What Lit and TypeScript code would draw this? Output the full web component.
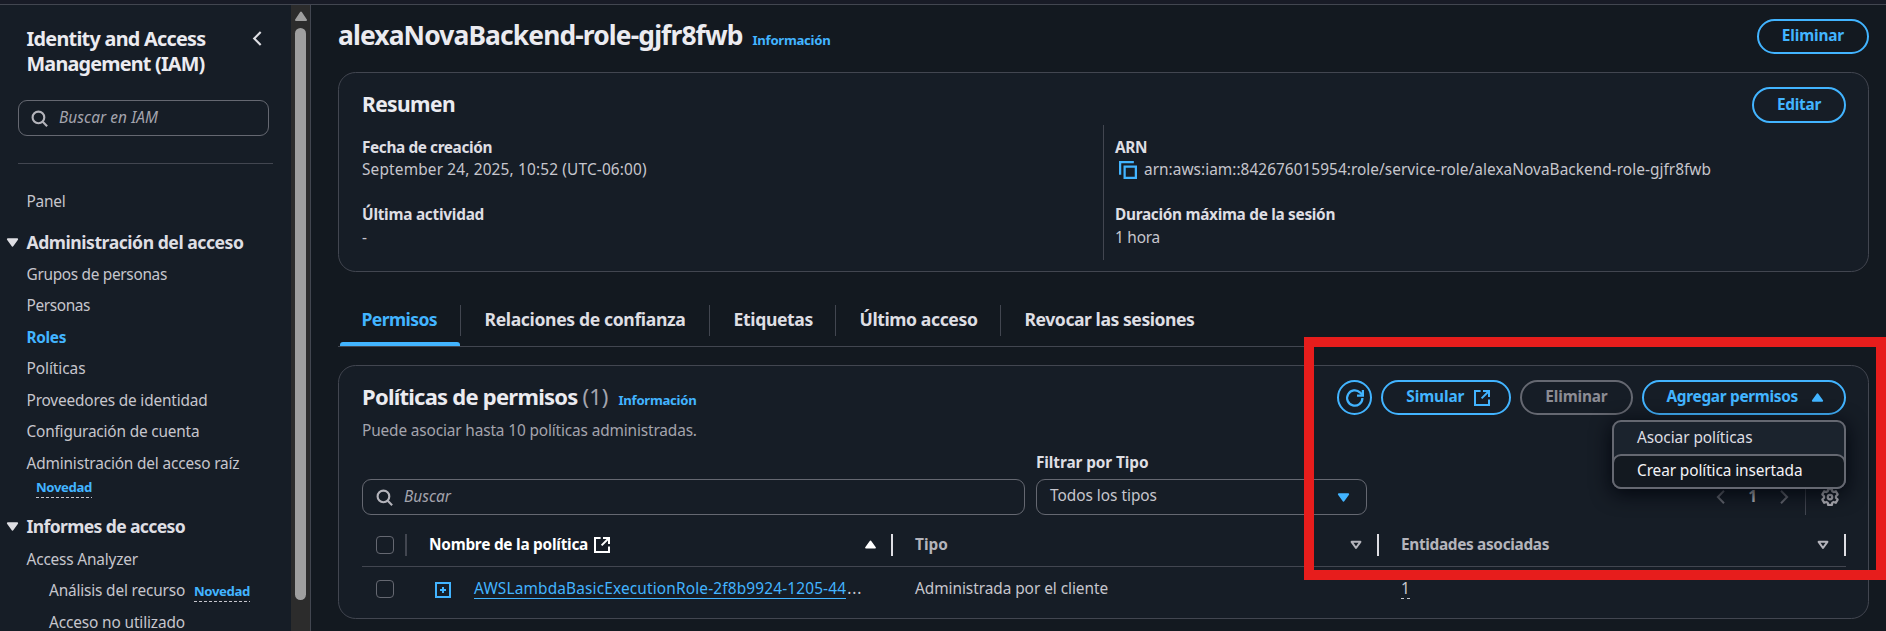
import { LitElement, html, css, svg, nothing } from "lit";
import { customElement, property } from "lit/decorators.js";
import { classMap } from "lit/directives/class-map.js";
import { styleMap } from "lit/directives/style-map.js";

/* Text with its tracking in px. */
const tx = (text: string, track: number, cls = "") =>
  html`<span class=${"tx " + cls} style=${styleMap({ letterSpacing: `${track}px` })}>${text}</span>`;

const icons: Record<string, unknown> = {
  search: svg`<circle cx="7" cy="7" r="5.5" fill="none"/><path d="m11 11 4.2 4.2" fill="none"/>`,
  left: svg`<path d="M11 1.8 4.9 8l6.1 6.2" fill="none"/>`,
  right: svg`<path d="M5 1.8 11.1 8 5 14.2" fill="none"/>`,
  down: svg`<path d="M3 4.5h10l-5 7z" fill="currentColor" stroke-linejoin="round"/>`,
  up: svg`<path d="M3 11.5h10l-5-7z" fill="currentColor" stroke-linejoin="round"/>`,
  downOutline: svg`<path d="M3.6 4.8h8.8L8 11z" fill="none" stroke-linejoin="round"/>`,
  external: svg`<path d="M6.6 1H1v14h14V9.6M9 1h6v6M15 1 7.6 8.4" fill="none"/>`,
  copy: svg`<path d="M1 12.2V1h12.2" fill="none"/><path d="M5 5h10v10H5z" fill="none"/>`,
  refresh: svg`<path d="M14.6 8A6.8 6.8 0 1 1 12.6 3.2L14.6 5.4" fill="none"/><path d="M15 .8v5H9.8" fill="none"/>`,
  plus: svg`<path d="M1 1h14v14H1z" fill="none"/><path d="M8 5v6M5 8h6" fill="none"/>`,
  gear: svg`<path d="M6.4 1h3.2l.5 2 1.1.6 2-.7 1.6 2.8L13.3 7.3v1.4l1.5 1.6-1.6 2.8-2-.7-1.1.6-.5 2H6.4l-.5-2-1.1-.6-2 .7-1.6-2.8 1.5-1.6V7.3L1.2 5.7l1.6-2.8 2 .7L5.9 3z" fill="none" stroke-linejoin="round"/><circle cx="8" cy="8" r="2" fill="none"/>`,
};

@customElement("iam-icon")
export class IamIcon extends LitElement {
  @property() name = "";
  @property({ type: Number }) size = 18;
  @property({ type: Number }) weight = 2;
  static styles = css`
    :host { display: inline-flex; flex: none; }
    svg { display: block; stroke: currentColor; overflow: visible; }
  `;
  render() {
    return html`<svg width=${this.size} height=${this.size} viewBox="0 0 16 16" stroke-width=${this.weight}>${icons[this.name]}</svg>`;
  }
}

const base = css`
  * { box-sizing: border-box; }
  :host { font: 400 15.4px/22px "Noto Sans", "Open Sans", sans-serif; color: #c6c6cd; }
  .tx { white-space: nowrap; }
  .bold { font-weight: 700; color: #dedee3; }
  .blue { color: #42b4ff; }
  .small { font-size: 13.2px; font-weight: 700; }
  .input {
    display: flex; align-items: center; height: 36px;
    border: 1px solid #656871; border-radius: 9px; padding: 0 12px;
  }
  .input iam-icon { color: #b4b4bb; }
  .input .hint { font-style: italic; color: #a4a4ad; margin-left: 11px; }
`;

interface NavItem { text: string; track: number; active?: boolean; sub?: boolean; badge?: "inline" | "below"; }

const accessItems: NavItem[] = [
  { text: "Grupos de personas", track: -0.31 },
  { text: "Personas", track: -0.38 },
  { text: "Roles", track: -0.34, active: true },
  { text: "Políticas", track: -0.06 },
  { text: "Proveedores de identidad", track: -0.18 },
  { text: "Configuración de cuenta", track: -0.18 },
  { text: "Administración del acceso raíz", track: -0.16, badge: "below" },
];
const reportItems: NavItem[] = [
  { text: "Access Analyzer", track: -0.17 },
  { text: "Análisis del recurso", track: -0.17, sub: true, badge: "inline" },
  { text: "Acceso no utilizado", track: -0.13, sub: true },
];

@customElement("iam-sidebar")
export class IamSidebar extends LitElement {
  static styles = [base, css`
    :host { display: flex; width: 311px; height: 100%; border-right: 1px solid #424650; overflow: hidden; }
    .nav { width: 291px; background: #161d26; flex: none; }
    .head { display: flex; justify-content: space-between; padding: 21px 25px 0 26.5px; height: 95px; }
    .title { font: 700 19.8px/25px "Noto Sans", sans-serif; color: #ebebf0; display: flex; flex-direction: column; }
    .head iam-icon { margin-top: 3.5px; color: #dedee3; }
    .input { width: 251px; margin-left: 18px; }
    .rule { height: 1px; background: #424650; margin: 27px 18px 0; }
    .panel { height: 32px; display: flex; align-items: center; margin: 22px 0 8px 26.5px; }
    .section { height: 32px; display: flex; align-items: center; padding-left: 6px; gap: 8.5px; font-size: 17.6px; margin-bottom: 1px; }
    .section.last { margin-bottom: 2px; }
    .section iam-icon { color: #dedee3; width: 12px; justify-content: center; }
    .item { height: 31.5px; display: flex; align-items: center; padding-left: 26.5px; gap: 9px; }
    .item.sub { padding-left: 49px; }
    .item.active .tx { color: #42b4ff; font-weight: 700; }
    .below { height: 31.5px; margin-top: -1px; padding-left: 36px; display: flex; align-items: flex-start; }
    .badge { color: #42b4ff; font-size: 13.2px; font-weight: 700; line-height: 17px; }
    .dash { display: flex; padding-bottom: 2.5px;
      background: repeating-linear-gradient(90deg, #c6c6cd 0 3px, transparent 3px 5px) left bottom / 100% 1px no-repeat; }
    .item .dash { margin-top: 2px; }
    .scroll { width: 19px; background: #2c2c2c; display: flex; flex-direction: column; align-items: center; padding-top: 6px; flex: none; }
    .thumb { width: 11px; height: 572px; margin-top: 7px; border-radius: 6px; background: #9f9f9f; flex: none; }
  `];
  private badge() { return html`<span class="dash">${tx("Novedad", -0.38, "badge")}</span>`; }
  private item(i: NavItem) {
    return html`<div class=${classMap({ item: true, sub: !!i.sub, active: !!i.active })}>
        ${tx(i.text, i.track)}${i.badge === "inline" ? this.badge() : nothing}
      </div>${i.badge === "below" ? html`<div class="below">${this.badge()}</div>` : nothing}`;
  }
  render() {
    return html`
      <div class="nav">
        <div class="head">
          <div class="title">${tx("Identity and Access", -0.71)}${tx("Management (IAM)", -0.79)}</div>
          <iam-icon name="left" size="17"></iam-icon>
        </div>
        <div class="input"><iam-icon name="search" size="17"></iam-icon>${tx("Buscar en IAM", 0.09, "hint")}</div>
        <div class="rule"></div>
        <div class="panel">${tx("Panel", -0.22)}</div>
        <div class="section"><iam-icon name="down" size="15"></iam-icon>${tx("Administración del acceso", -0.47, "bold")}</div>
        ${accessItems.map((i) => this.item(i))}
        <div class="section last"><iam-icon name="down" size="15"></iam-icon>${tx("Informes de acceso", -0.65, "bold")}</div>
        ${reportItems.map((i) => this.item(i))}
      </div>
      <div class="scroll">
        <svg width="12" height="10" viewBox="0 0 12 10"><path d="M6 1.5 11 9H1z" fill="#9f9f9f" stroke="#9f9f9f" stroke-width="2" stroke-linejoin="round"/></svg>
        <div class="thumb"></div>
      </div>`;
  }
}

const tabs: [string, number, number][] = [
  ["Permisos", -0.61, 123],
  ["Relaciones de confianza", -0.37, 249],
  ["Etiquetas", -0.37, 126],
  ["Último acceso", -0.4, 165],
  ["Revocar las sesiones", -0.46, 194],
];

@customElement("app-root")
export class AppRoot extends LitElement {
  static styles = [base, css`
    :host { display: flex; flex-direction: column; position: relative; width: 1886px; height: 631px; overflow: hidden; background: #131920; }
    .topbar { height: 5px; flex: none; background: #181b26; border-bottom: 1px solid #424650; }
    .body { display: flex; flex: 1; min-height: 0; }
    main { flex: 1; padding: 0 17px 0 27px; display: flex; flex-direction: column; min-width: 0; }
    .titlebar { height: 67px; display: flex; justify-content: space-between; padding-top: 14px; flex: none; }
    .h { display: flex; align-items: baseline; color: #ebebf0; font-weight: 700; }
    .h1 { font-size: 26.4px; line-height: 32px; height: 32px; gap: 10px; }
    .h2 { font-size: 22px; line-height: 32px; height: 32px; }
    .btn { height: 35px; border: 2px solid #42b4ff; border-radius: 18px; color: #42b4ff; font-weight: 700;
      display: flex; align-items: center; padding: 0 23px; flex: none; }
    .btn .tx { padding-bottom: 2px; }
    .btn.off { border-color: #656871; color: #8c8c94; }
    .card { border: 1px solid #424650; border-radius: 17.6px; background: #161d26; padding: 0 22px 0 23px; flex: none; }
    .summary { height: 200px; }
    .cardhead { display: flex; justify-content: space-between; padding-top: 14px; height: 52px; }
    .cardhead .h { font-size: 21px; line-height: 34px; }
    .cardhead .btn { height: 36px; }
    .cardhead .btn .tx { padding-bottom: 1px; }
    .cols { display: grid; grid-template-columns: 741px 1fr; height: 135px; }
    .col { padding-top: 11.5px; display: flex; flex-direction: column; }
    .col + .col { border-left: 1px solid #424650; padding-left: 11px; }
    .val { height: 23px; display: flex; align-items: center; }
    .gap { height: 22.5px; }
    .arn { gap: 7px; padding-left: 4px; }
    .tabs { display: flex; height: 75px; padding-top: 33px; border-bottom: 1px solid #424650; flex: none; }
    .tab { display: flex; flex-direction: column; justify-content: space-between; font-size: 17.6px; }
    .tab .label { height: 31px; line-height: 28px; padding-left: 23.5px; border-right: 1px solid #424650; }
    .tab:last-child .label { border-right: 0; }
    .tab .blue { color: #42b4ff; }
    .bar { height: 4px; width: 120px; margin-left: 2px; border-radius: 3px 3px 0 0; background: #42b4ff; }
    .policies { margin-top: 18px; height: 254px; }
    .phead { display: flex; justify-content: space-between; padding-top: 14px; height: 85px; }
    .count { font-weight: 400; color: #a4a4ad; margin: 0 10px 0 5px; }
    .desc { color: #a4a4ad; margin-top: 8px; }
    .actions { display: flex; gap: 9px; align-items: flex-start; }
    .round { padding: 0; width: 35px; justify-content: center; }
    .simulate { gap: 10px; padding-right: 19px; }
    .menuwrap { position: relative; }
    .add { gap: 12px; padding-right: 19px; }
    .menu { position: absolute; z-index: 2; top: 40px; right: 0; width: 234px; height: 69px; border: 2px solid #656871; border-radius: 9px;
      background: #1b232d; box-shadow: 0 4px 20px 1px rgba(0, 4, 12, 0.9); color: #dedee3; display: flex; flex-direction: column; }
    .opt { height: 32px; line-height: 29px; padding: 1px 23px 0; flex: none; }
    .opt.hot { height: 35px; margin: 0 -2px -2px; border: 2px solid #656871; border-radius: 9px; background: #131920; color: #f3f3f7; line-height: 29px; padding: 0 23px; }
    .filters { display: flex; align-items: flex-end; height: 64px; }
    .filters .find { width: 663px; }
    .find iam-icon { margin-left: 1px; }
    .type { width: 331px; margin-left: 11px; }
    .type .label { display: block; margin-bottom: 5px; }
    .type .input { justify-content: space-between; padding: 0 15px 0 13px; }
    .type .input .tx { padding-bottom: 2px; }
    .type .input iam-icon { color: #42b4ff; }
    .pager { margin-left: auto; height: 36px; display: flex; align-items: center; color: #656871; }
    .page { color: #b4b4bb; font-weight: 700; margin: 0 18.5px 0 19.5px; padding-bottom: 1px; }
    .vr { width: 1px; height: 36px; background: #424650; margin: 0 15px 0 13.5px; }
    .pager .gear { color: #b4b4bb; margin-right: 7px; }
    .row { display: grid; grid-template-columns: 45px 486px 486px 467px; align-items: center; }
    .thead { height: 52px; padding-top: 8px; border-bottom: 1px solid #424650; color: #b4b4bb; font-weight: 700; }
    .trow { height: 44px; }
    .cell { display: flex; align-items: center; padding-left: 22px; height: 22px; }
    .thead .cell { border-right: 2px solid #dedee3; padding-right: 13px; }
    .cell .sort { margin-left: auto; }
    .cell.sorted { color: #fff; }
    .thead .cell.sel { border-color: #424650; padding-right: 0; }
    .cell.sel { padding-left: 14px; }
    .box { width: 18px; height: 18px; border: 1.6px solid #656871; border-radius: 4px; flex: none; }
    .ext { margin: 1px 0 0 6px; }
    .exp { margin: 0 23px 0 6px; padding-top: 2px; color: #42b4ff; }
    .link { color: #42b4ff; border-bottom: 1px solid #42b4ff; height: 21px; align-self: flex-start; }
    .more { margin-left: 1px; }
    .num { background: repeating-linear-gradient(90deg, #c6c6cd 0 3px, transparent 3px 6px) left bottom / 100% 1px no-repeat; height: 21px; align-self: flex-start; }
    .mark { position: absolute; z-index: 3; left: 1304px; top: 336.5px; width: 582px; height: 243.5px; border: 10px solid #e71d1c; }
  `];

  render() {
    return html`
      <div class="topbar"></div>
      <div class="body">
        <iam-sidebar></iam-sidebar>
        <main>
          <div class="titlebar">
            <div class="h h1">${tx("alexaNovaBackend-role-gjfr8fwb", -0.87)}${tx("Información", -0.3, "small blue")}</div>
            <div class="btn">${tx("Eliminar", -0.17)}</div>
          </div>
          <section class="card summary">
            <div class="cardhead">
              <div class="h h2">${tx("Resumen", -0.6)}</div>
              <div class="btn">${tx("Editar", -0.29)}</div>
            </div>
            <div class="cols">
              <div class="col">
                ${tx("Fecha de creación", -0.4, "bold")}
                <div class="val">${tx("September 24, 2025, 10:52 (UTC-06:00)", 0.16)}</div>
                <div class="gap"></div>
                ${tx("Última actividad", -0.26, "bold")}
                <div class="val">-</div>
              </div>
              <div class="col">
                ${tx("ARN", -0.42, "bold")}
                <div class="val arn"><iam-icon class="blue" name="copy" size="18"></iam-icon>${tx("arn:aws:iam::842676015954:role/service-role/alexaNovaBackend-role-gjfr8fwb", 0.04)}</div>
                <div class="gap"></div>
                ${tx("Duración máxima de la sesión", -0.31, "bold")}
                <div class="val">${tx("1 hora", -0.22)}</div>
              </div>
            </div>
          </section>
          <nav class="tabs">
            ${tabs.map(([t, track, w], i) => html`
              <div class="tab" style=${styleMap({ width: `${w}px` })}>
                <div class="label">${tx(t, track, i === 0 ? "bold blue" : "bold")}</div>
                ${i === 0 ? html`<div class="bar"></div>` : nothing}
              </div>`)}
          </nav>
          <section class="card policies">
            <div class="phead">
              <div>
                <div class="h h2">${tx("Políticas de permisos", -0.76)}${tx("(1)", 0.07, "count")}${tx("Información", -0.3, "small blue")}</div>
                <div class="desc">${tx("Puede asociar hasta 10 políticas administradas.", -0.14)}</div>
              </div>
              <div class="actions">
                <div class="btn round"><iam-icon name="refresh" size="18"></iam-icon></div>
                <div class="btn simulate">${tx("Simular", -0.11)}<iam-icon name="external" size="16"></iam-icon></div>
                <div class="btn off">${tx("Eliminar", -0.17)}</div>
                <div class="menuwrap">
                  <div class="btn add">${tx("Agregar permisos", -0.31)}<iam-icon name="up" size="15"></iam-icon></div>
                  <div class="menu">
                    <div class="opt">${tx("Asociar políticas", -0.06)}</div>
                    <div class="opt hot">${tx("Crear política insertada", -0.1)}</div>
                  </div>
                </div>
              </div>
            </div>
            <div class="filters">
              <div class="input find"><iam-icon name="search" size="17"></iam-icon>${tx("Buscar", 0.06, "hint")}</div>
              <div class="type">
                ${tx("Filtrar por Tipo", -0.1, "bold label")}
                <div class="input">${tx("Todos los tipos", -0.02)}<iam-icon name="down" size="15"></iam-icon></div>
              </div>
              <div class="pager">
                <iam-icon name="left" size="16"></iam-icon>
                <span class="page">1</span>
                <iam-icon name="right" size="16"></iam-icon>
                <span class="vr"></span>
                <iam-icon class="gear" name="gear" size="18"></iam-icon>
              </div>
            </div>
            <div class="row thead">
              <div class="cell sel"><span class="box"></span></div>
              <div class="cell sorted">${tx("Nombre de la política", -0.25)}<iam-icon class="ext" name="external" size="16"></iam-icon><iam-icon class="sort" name="up" size="15" weight="1.5"></iam-icon></div>
              <div class="cell">${tx("Tipo", 0.04)}<iam-icon class="sort" name="downOutline" size="16"></iam-icon></div>
              <div class="cell">${tx("Entidades asociadas", -0.34)}<iam-icon class="sort" name="downOutline" size="16"></iam-icon></div>
            </div>
            <div class="row trow">
              <div class="cell sel"><span class="box"></span></div>
              <div class="cell"><iam-icon class="exp" name="plus" size="16"></iam-icon>${tx("AWSLambdaBasicExecutionRole-2f8b9924-1205-44", 0.16, "link")}${tx("...", 0.9, "more")}</div>
              <div class="cell">${tx("Administrada por el cliente", -0.05)}</div>
              <div class="cell"><span class="num">1</span></div>
            </div>
          </section>
        </main>
      </div>
      <div class="mark"></div>`;
  }
}
